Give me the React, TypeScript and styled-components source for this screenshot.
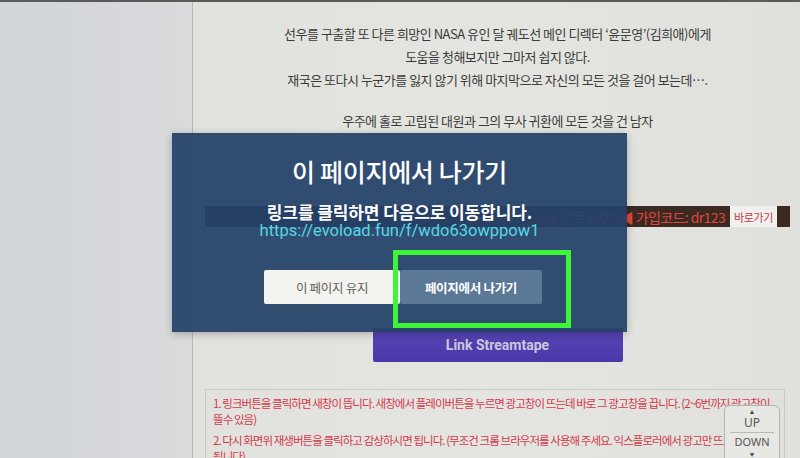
import React from "react";
import styled, { createGlobalStyle } from "styled-components";

const Global = createGlobalStyle`
  html, body { margin: 0; padding: 0; background: #dfe0dc; }
  body { font-family: "Noto Sans CJK KR", "Noto Sans", sans-serif; }
  * { box-sizing: border-box; }
`;

const Page = styled.div`
  position: relative;
  width: 800px;
  height: 458px;
  overflow: hidden;
  display: flex;
  border-top: 2px solid #5a5b58;
  background: linear-gradient(90deg, #dfe0dc 0%, #e4e5e1 60%, #e0e1dd 100%);
`;

const Sidebar = styled.div`
  width: 193px;
  flex-shrink: 0;
  background: linear-gradient(90deg, #d2d5d9 0%, #d9dbdd 100%);
  border-right: 1px solid #b9bab6;
`;

const Main = styled.div`
  flex: 1;
  display: flex;
  flex-direction: column;
  align-items: center;
  padding: 20px 10px 0 12px;
`;

const Synopsis = styled.div`
  display: flex;
  flex-direction: column;
  align-items: center;
  color: #3a3a38;
  font-size: 13px;
  letter-spacing: -0.5px;
  line-height: 23px;
  text-align: center;
`;

const Gap = styled.div<{ $h: number }>`
  height: ${(p) => p.$h}px;
`;

const PromoBar = styled.div`
  align-self: stretch;
  margin-top: 74px;
  height: 23px;
  background: #3a2a22;
  display: flex;
  align-items: center;
  justify-content: flex-end;
  gap: 5px;
  padding-right: 13px;
`;

const PromoText = styled.span`
  color: #e2463c;
  font-size: 14px;
  letter-spacing: -0.6px;
  white-space: nowrap;
`;

const GoButton = styled.span`
  background: #f2f0ee;
  color: #c23a48;
  font-size: 11px;
  letter-spacing: -0.4px;
  height: 21px;
  padding: 0 4px;
  display: flex;
  align-items: center;
`;

const StreamButton = styled.div`
  margin-top: 101px;
  width: 250px;
  height: 34px;
  flex-shrink: 0;
  background: linear-gradient(180deg, #5846b6 0%, #4b38a8 100%);
  border-radius: 2px;
  color: #c9c8dc;
  font-family: Roboto, "Noto Sans", sans-serif;
  font-weight: 700;
  font-size: 14px;
  display: flex;
  align-items: center;
  justify-content: center;
`;

const Notice = styled.div`
  align-self: stretch;
  margin: 27px 5px 0 0;
  border: 1px solid #c9cac6;
  padding: 5px 2px 0 7px;
  color: #d33a4a;
  font-size: 11.5px;
  letter-spacing: -0.95px;
  line-height: 16px;
  word-break: keep-all;
`;

const NoticeLine = styled.p`
  margin: 0 0 5px;
`;

const Modal = styled.div`
  position: absolute;
  left: 172px;
  top: 131px;
  width: 455px;
  height: 199px;
  background: rgba(36, 66, 104, 0.94);
  box-shadow: 0 2px 8px rgba(0, 0, 0, 0.25);
  display: flex;
  flex-direction: column;
  align-items: center;
  padding-top: 22px;
`;

const Title = styled.div`
  color: #ffffff;
  font-size: 25px;
  font-weight: 500;
  line-height: 32px;
  letter-spacing: -0.3px;
`;

const Subtitle = styled.div`
  margin-top: 14px;
  color: #ffffff;
  font-size: 17px;
  font-weight: 700;
  line-height: 21px;
  letter-spacing: -0.1px;
`;

const Url = styled.div`
  color: #56d8e6;
  font-family: Roboto, "Noto Sans", sans-serif;
  font-size: 16.5px;
  line-height: 18px;
`;

const ButtonRow = styled.div`
  margin-top: 30px;
  display: flex;
  padding-left: 7px;
`;

const ModalButton = styled.div<{ $primary?: boolean }>`
  width: ${(p) => (p.$primary ? 142 : 136)}px;
  height: 34px;
  display: flex;
  align-items: center;
  justify-content: center;
  font-size: 12.5px;
  letter-spacing: -0.3px;
  background: ${(p) => (p.$primary ? "#5c7897" : "#f3f3ef")};
  color: ${(p) => (p.$primary ? "#ffffff" : "#616161")};
  font-weight: ${(p) => (p.$primary ? 700 : 400)};
  border-radius: 2px;
`;

const Highlight = styled.div`
  position: absolute;
  left: 393px;
  top: 248px;
  width: 178px;
  height: 78px;
  border: 5px solid #3ef53a;
`;

const ScrollWidget = styled.div`
  position: absolute;
  left: 724px;
  top: 403px;
  width: 56px;
  height: 64px;
  background: #e7e8e4;
  border: 1px solid #b3b4b0;
  border-radius: 6px;
  display: flex;
  flex-direction: column;
  align-items: center;
  color: #4a4a4a;
  font-family: "Noto Sans", sans-serif;
`;

const Arrow = styled.div`
  font-size: 7px;
  line-height: 9px;
  margin-top: 1px;
`;

const ScrollLabel = styled.div<{ $small?: boolean }>`
  font-size: ${(p) => (p.$small ? 11 : 12)}px;
  line-height: ${(p) => (p.$small ? 14 : 13)}px;
  color: #555;
`;

const Divider = styled.div`
  width: 44px;
  height: 1px;
  background: #b8b9b5;
  margin: 3px 0 2px;
`;

export default function App() {
  return (
    <>
      <Global />
      <Page>
        <Sidebar />
        <Main>
          <Synopsis>
            <div>선우를 구출할 또 다른 희망인 NASA 유인 달 궤도선 메인 디렉터 ‘윤문영’(김희애)에게</div>
            <div>도움을 청해보지만 그마저 쉽지 않다.</div>
            <div>재국은 또다시 누군가를 잃지 않기 위해 마지막으로 자신의 모든 것을 걸어 보는데….</div>
            <Gap $h={18} />
            <div>우주에 홀로 고립된 대원과 그의 무사 귀환에 모든 것을 건 남자</div>
          </Synopsis>
          <PromoBar>
            <PromoText>▶ 신규가입시 포인트 100%◀ 가입코드: dr123</PromoText>
            <GoButton>바로가기</GoButton>
          </PromoBar>
          <StreamButton>Link Streamtape</StreamButton>
          <Notice>
            <NoticeLine>
              1. 링크버튼을 클릭하면 새창이 뜹니다. 새창에서 플레이버튼을 누르면 광고창이 뜨는데 바로 그 광고창을 끕니다. (2~6번까지 광고창이
              뜰수 있음)
            </NoticeLine>
            <NoticeLine>
              2. 다시 화면위 재생버튼을 클릭하고 감상하시면 됩니다. (무조건 크롬 브라우저를 사용해 주세요. 익스플로러에서 광고만 뜨고 재생이 안
              됩니다)
            </NoticeLine>
          </Notice>
        </Main>
        <Modal>
          <Title>이 페이지에서 나가기</Title>
          <Subtitle>링크를 클릭하면 다음으로 이동합니다.</Subtitle>
          <Url>https://evoload.fun/f/wdo63owppow1</Url>
          <ButtonRow>
            <ModalButton>이 페이지 유지</ModalButton>
            <ModalButton $primary>페이지에서 나가기</ModalButton>
          </ButtonRow>
        </Modal>
        <Highlight />
        <ScrollWidget>
          <Arrow>▲</Arrow>
          <ScrollLabel>UP</ScrollLabel>
          <Divider />
          <ScrollLabel $small>DOWN</ScrollLabel>
          <Arrow>▼</Arrow>
        </ScrollWidget>
      </Page>
    </>
  );
}
